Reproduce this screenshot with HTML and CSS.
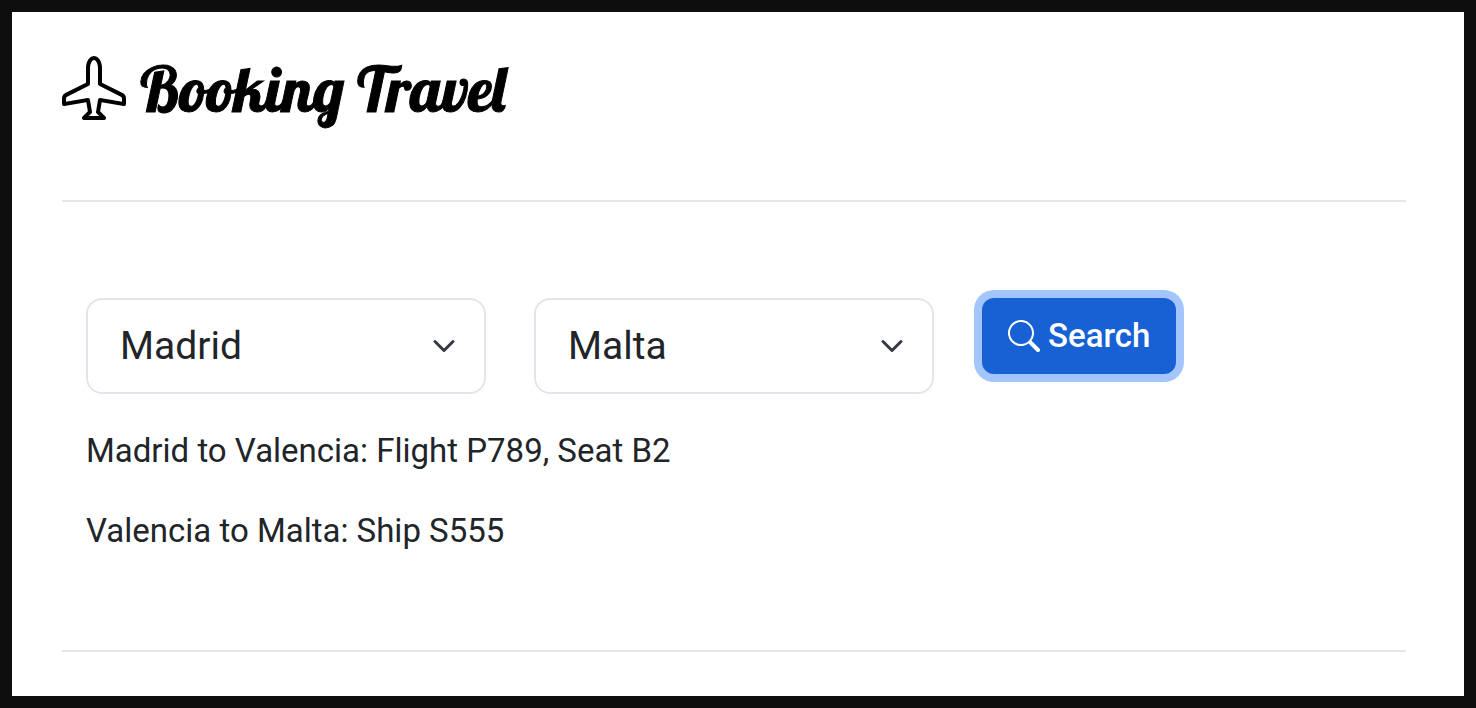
FILE: index.html
```html
<!DOCTYPE html>
<html lang="en">
<head>
<meta charset="utf-8">
<meta name="viewport" content="width=device-width, initial-scale=1">
<title>Booking Travel</title>
<link rel="stylesheet" href="styles.css">
</head>
<body>
<div class="page">
  <header class="header">
    <svg class="brand-icon" viewBox="0 0 16 16" fill="currentColor" aria-hidden="true"><path d="M6.428 1.151C6.708.591 7.213 0 8 0s1.292.592 1.572 1.151C9.861 1.73 10 2.431 10 3v3.691l5.17 2.585a1.5 1.5 0 0 1 .83 1.342V12a.5.5 0 0 1-.582.493l-5.507-.918-.375 2.253 1.318 1.318A.5.5 0 0 1 10.5 16h-5a.5.5 0 0 1-.354-.854l1.319-1.318-.376-2.253-5.507.918A.5.5 0 0 1 0 12v-1.382a1.5 1.5 0 0 1 .83-1.342L6 6.691V3c0-.568.14-1.271.428-1.849Zm.894.448C7.111 2.02 7 2.569 7 3v4a.5.5 0 0 1-.276.447l-5.448 2.724a.5.5 0 0 0-.276.447v.792l5.418-.903a.5.5 0 0 1 .575.41l.5 3a.5.5 0 0 1-.14.437L6.708 15h2.586l-.647-.646a.5.5 0 0 1-.14-.436l.5-3a.5.5 0 0 1 .576-.411L15 11.41v-.792a.5.5 0 0 0-.276-.447L9.276 7.447A.5.5 0 0 1 9 7V3c0-.432-.11-.979-.322-1.401C8.458 1.159 8.213 1 8 1c-.213 0-.458.158-.678.599Z"/></svg>
    <h1 class="brand">Booking Travel</h1>
  </header>
  <main class="content">
    <form class="search">
      <div class="field">
        <select class="select" aria-label="Origin"><option selected>Madrid</option><option>Valencia</option><option>Malta</option></select>
        <svg class="chevron" viewBox="0 0 16 16" aria-hidden="true"><path d="m2 5 6 6 6-6"/></svg>
      </div>
      <div class="field">
        <select class="select" aria-label="Destination"><option>Madrid</option><option>Valencia</option><option selected>Malta</option></select>
        <svg class="chevron" viewBox="0 0 16 16" aria-hidden="true"><path d="m2 5 6 6 6-6"/></svg>
      </div>
      <button class="button" type="button">
        <svg class="button-icon" viewBox="0 0 16 16" fill="currentColor" aria-hidden="true"><path d="M11.742 10.344a6.5 6.5 0 1 0-1.397 1.398h-.001c.03.04.062.078.098.115l3.85 3.85a1 1 0 0 0 1.415-1.414l-3.85-3.85a1.007 1.007 0 0 0-.115-.1zM12 6.5a5.5 5.5 0 1 1-11 0 5.5 5.5 0 0 1 11 0z"/></svg>
        Search
      </button>
    </form>
    <p class="leg">Madrid to Valencia: Flight P789, Seat B2</p>
    <p class="leg">Valencia to Malta: Ship S555</p>
  </main>
</div>
</body>
</html>
```

FILE: styles.css
```css
* {
  box-sizing: border-box;
}

body {
  margin: 0;
  min-height: 100vh;
  display: flex;
  padding: 12px;
  background: #0e0e0e;
  color: #212529;
  font: 33px/50px Roboto, "Liberation Sans", sans-serif;
}

.page {
  flex: 1;
  padding: 40px 58px 44px 50px;
  background: #fff;
}

.header {
  display: flex;
  align-items: flex-start;
  gap: 14px;
  padding: 4px 0 78px;
  border-bottom: 2px solid #e5e8eb;
  color: #000;
}

.brand-icon {
  width: 64px;
  height: 64px;
}

.brand {
  margin: 0;
  font: 400 62px/66px Lobster, "Liberation Serif", serif;
  -webkit-text-stroke: 1px currentColor;
}

.content {
  padding: 96px 24px 94px;
  border-bottom: 2px solid #e5e8eb;
}

.search {
  display: flex;
  align-items: flex-start;
  gap: 48px;
  margin-bottom: 32px;
}

.field {
  position: relative;
  flex: 0 1 400px;
}

.select {
  appearance: none;
  width: 100%;
  padding: 16px 32px;
  border: 2px solid #e2e6ea;
  border-radius: 16px;
  background: #fff;
  color: inherit;
  font: inherit;
  font-size: 39px;
  line-height: 60px;
}

.chevron {
  position: absolute;
  top: 36px;
  right: 28px;
  width: 28px;
  height: 24px;
  fill: none;
  stroke: #343a40;
  stroke-width: 2;
  stroke-linecap: round;
  stroke-linejoin: round;
  pointer-events: none;
}

.button {
  display: flex;
  align-items: center;
  gap: 8px;
  padding: 13px 26px;
  border: 0;
  border-radius: 12px;
  background: #1761d5;
  box-shadow: 0 0 0 8px #a3c5fb;
  color: #fff;
  font: inherit;
  font-weight: 500;
}

.button-icon {
  width: 32px;
  height: 32px;
}

.leg {
  margin: 0 0 30px;
}

.leg:last-child {
  margin-bottom: 0;
}
```
